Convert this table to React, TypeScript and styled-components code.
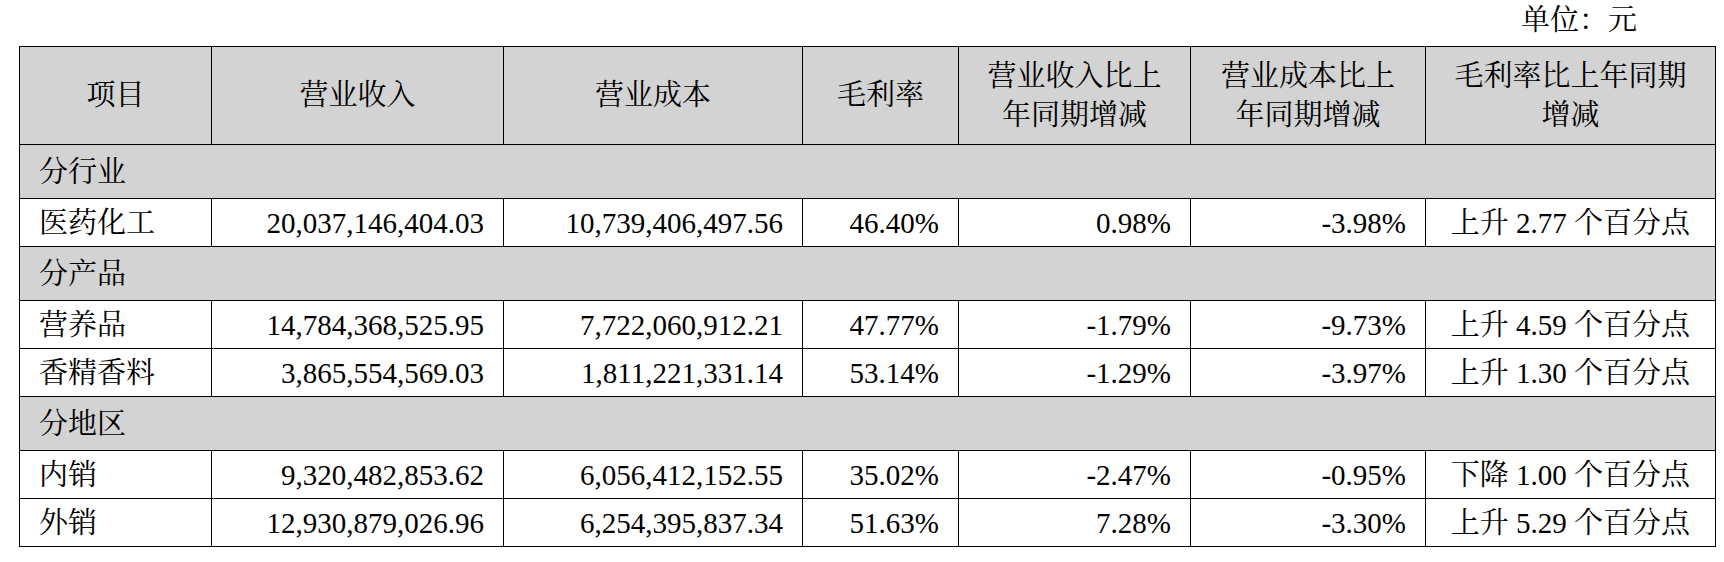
import React from "react";
import styled, { createGlobalStyle } from "styled-components";

const GlobalStyle = createGlobalStyle`
  html, body {
    margin: 0;
    padding: 0;
    background: #ffffff;
  }
  body {
    font-family: "Liberation Serif", "Noto Serif CJK SC", "Noto Sans CJK SC", serif;
    color: #000000;
  }
`;

const Page = styled.div`
  width: 1724px;
  padding: 0 9px 0 19px;
  box-sizing: border-box;
  display: flex;
  flex-direction: column;
`;

const Caption = styled.div`
  height: 40px;
  line-height: 40px;
  font-size: 29px;
  text-align: right;
  padding-right: 78px;
  margin-bottom: 6px;
`;

const Table = styled.table`
  width: 1696px;
  border-collapse: collapse;
  table-layout: fixed;
  font-size: 29px;
`;

type Align = "left" | "right" | "center";

const HeadCell = styled.th`
  height: 97px;
  padding: 0 6px;
  background: #d3d3d3;
  border: 1px solid #000000;
  font-weight: normal;
  text-align: center;
  vertical-align: middle;
  line-height: 39px;
`;

const SectionCell = styled.td`
  height: 53px;
  padding: 0 0 0 19px;
  background: #d3d3d3;
  border: 1px solid #000000;
  text-align: left;
  vertical-align: middle;
  line-height: 34px;
`;

const Cell = styled.td<{ $align: Align }>`
  height: 47px;
  padding: ${(p) =>
    p.$align === "left" ? "0 0 0 19px" : p.$align === "right" ? "0 19px 0 0" : "0"};
  background: #ffffff;
  border: 1px solid #000000;
  text-align: ${(p) => p.$align};
  vertical-align: middle;
  white-space: nowrap;
  line-height: 34px;
`;

const widths = [192, 292, 299, 156, 232, 235, 290];

const headers: string[][] = [
  ["项目"],
  ["营业收入"],
  ["营业成本"],
  ["毛利率"],
  ["营业收入比上", "年同期增减"],
  ["营业成本比上", "年同期增减"],
  ["毛利率比上年同期", "增减"],
];

type Row = { section: string } | { cells: string[] };

const rows: Row[] = [
  { section: "分行业" },
  {
    cells: ["医药化工", "20,037,146,404.03", "10,739,406,497.56", "46.40%", "0.98%", "-3.98%", "上升 2.77 个百分点"],
  },
  { section: "分产品" },
  {
    cells: ["营养品", "14,784,368,525.95", "7,722,060,912.21", "47.77%", "-1.79%", "-9.73%", "上升 4.59 个百分点"],
  },
  {
    cells: ["香精香料", "3,865,554,569.03", "1,811,221,331.14", "53.14%", "-1.29%", "-3.97%", "上升 1.30 个百分点"],
  },
  { section: "分地区" },
  {
    cells: ["内销", "9,320,482,853.62", "6,056,412,152.55", "35.02%", "-2.47%", "-0.95%", "下降 1.00 个百分点"],
  },
  {
    cells: ["外销", "12,930,879,026.96", "6,254,395,837.34", "51.63%", "7.28%", "-3.30%", "上升 5.29 个百分点"],
  },
];

const alignFor = (i: number): Align => (i === 0 ? "left" : i === 6 ? "center" : "right");

export default function App() {
  return (
    <>
      <GlobalStyle />
      <Page>
        <Caption>单位：元</Caption>
        <Table>
          <colgroup>
            {widths.map((w, i) => (
              <col key={i} style={{ width: w }} />
            ))}
          </colgroup>
          <thead>
            <tr>
              {headers.map((lines, i) => (
                <HeadCell key={i}>
                  {lines.map((l, j) => (
                    <React.Fragment key={j}>
                      {j > 0 && <br />}
                      {l}
                    </React.Fragment>
                  ))}
                </HeadCell>
              ))}
            </tr>
          </thead>
          <tbody>
            {rows.map((r, i) =>
              "section" in r ? (
                <tr key={i}>
                  <SectionCell colSpan={7}>{r.section}</SectionCell>
                </tr>
              ) : (
                <tr key={i}>
                  {r.cells.map((c, j) => (
                    <Cell key={j} $align={alignFor(j)}>
                      {c}
                    </Cell>
                  ))}
                </tr>
              )
            )}
          </tbody>
        </Table>
      </Page>
    </>
  );
}
